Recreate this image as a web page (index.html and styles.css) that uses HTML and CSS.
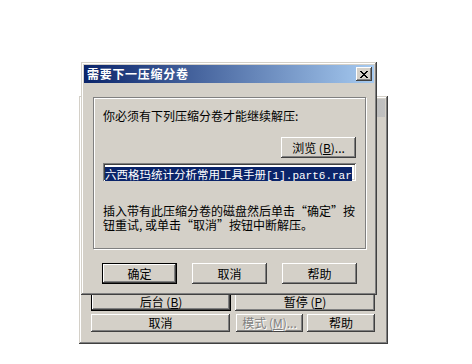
FILE: index.html
```html
<!DOCTYPE html>
<html lang="zh-CN">
<head>
<meta charset="utf-8">
<link rel="stylesheet" href="styles.css">
</head>
<body>
<div class="desktop">
  <div class="window back">
    <div class="titlebar inactive"></div>
    <div class="back-body"></div>
    <div class="back-row">
      <div class="btn default w140"><span>后台 (<u>B</u>)</span></div>
      <div class="btn w140"><span>暂停 (<u>P</u>)</span></div>
    </div>
    <div class="back-row row2">
      <div class="btn w139"><span>取消</span></div>
      <div class="btn w67 disabled"><span>模式 (<u>M</u>)...</span></div>
      <div class="btn w68"><span>帮助</span></div>
    </div>
  </div>

  <div class="window front">
    <div class="titlebar active">
      <span class="title">需要下一压缩分卷</span>
      <div class="closebtn">
        <svg width="8" height="7" viewBox="0 0 8 7"><path d="M0 0h2v1H0z M6 0h2v1H6z M1 1h2v1H1z M5 1h2v1H5z M2 2h4v1H2z M3 3h2v1H3z M2 4h4v1H2z M1 5h2v1H1z M5 5h2v1H5z M0 6h2v1H0z M6 6h2v1H6z" fill="#000"/></svg>
      </div>
    </div>
    <div class="dlg-body">
      <div class="group">
        <div class="line">你必须有下列压缩分卷才能继续解压:</div>
        <div class="btn browse"><span>浏览 (<u>B</u>)...</span></div>
        <div class="field"><span class="sel">六西格玛统计分析常用工具手册<span class="mono">[1].part6.rar</span></span></div>
        <div class="para">插入带有此压缩分卷的磁盘然后单击“确定”按<br>钮重试, 或单击“取消”按钮中断解压。</div>
      </div>
      <div class="buttons">
        <div class="btn default w75"><span>确定</span></div>
        <div class="btn w75"><span>取消</span></div>
        <div class="btn w75"><span>帮助</span></div>
      </div>
    </div>
  </div>
</div>
</body>
</html>
```
FILE: styles.css
```css
html, body {
  margin: 0;
  padding: 0;
  background: #ffffff;
}
.desktop {
  position: relative;
  width: 472px;
  height: 364px;
  overflow: hidden;
  font-family: "Noto Sans CJK SC", "Liberation Sans", sans-serif;
  font-size: 12px;
  color: #000;
}
.window {
  position: absolute;
  box-sizing: border-box;
  background: #d4d0c8;
  padding: 3px;
  display: flex;
  flex-direction: column;
  box-shadow: inset -1px -1px #404040, inset 1px 1px #d4d0c8,
              inset -2px -2px #808080, inset 2px 2px #ffffff;
}
.back {
  left: 79px;
  top: 96px;
  width: 309px;
  height: 248px;
  padding: 3px 13px 12px 12px;
}
.back .titlebar {
  margin: 0 -10px 0 -9px;
}
.front {
  left: 81px;
  top: 62px;
  width: 296px;
  height: 233px;
}
.titlebar {
  height: 18px;
  display: flex;
  align-items: center;
  justify-content: space-between;
  padding: 0 2px 0 3px;
  flex: none;
}
.titlebar.inactive {
  background: linear-gradient(to right, #808080, #c0c0c0);
}
.titlebar.active {
  background: linear-gradient(to right, #0a246a, #a6caf0);
}
.title {
  color: #fff;
  font-weight: bold;
  font-size: 12px;
  line-height: 14px;
  letter-spacing: 0.7px;
}
.closebtn {
  width: 16px;
  height: 14px;
  box-sizing: border-box;
  background: #d4d0c8;
  display: flex;
  align-items: center;
  justify-content: center;
  box-shadow: inset -1px -1px #404040, inset 1px 1px #ffffff,
              inset -2px -2px #808080, inset 2px 2px #d4d0c8;
}
.back-body {
  flex: 1;
}
.back-row {
  display: flex;
  gap: 4px;
  height: 18px;
}
.back-row.row2 {
  margin-top: 3px;
}
.back-row.row2 .w139 {
  margin-right: 2px;
}
.btn {
  box-sizing: border-box;
  background: #d4d0c8;
  display: flex;
  align-items: center;
  justify-content: center;
  line-height: 14px;
  white-space: nowrap;
  box-shadow: inset -1px -1px #404040, inset 1px 1px #ffffff,
              inset -2px -2px #808080, inset 2px 2px #d4d0c8;
}
.btn.default {
  border: 1px solid #000;
}
.btn u {
  text-decoration: underline;
}
.btn.disabled {
  color: #808080;
  text-shadow: 1px 1px #fff;
}
.w140 { width: 140px; }
.w139 { width: 139px; }
.w67 { width: 67px; }
.w68 { width: 68px; }
.w75 { width: 75px; height: 21px; }
.dlg-body {
  display: flex;
  flex-direction: column;
  padding: 14px 8px 0 9px;
}
.group {
  box-sizing: border-box;
  height: 152px;
  border: 1px solid #808080;
  box-shadow: inset 1px 1px #ffffff, 1px 1px #ffffff;
  padding: 11px 9px 0 9px;
  display: flex;
  flex-direction: column;
}
.line {
  line-height: 14px;
  height: 14px;
}
.browse {
  align-self: flex-end;
  width: 75px;
  height: 21px;
  margin-top: 14px;
}
.field {
  margin-top: 5px;
  width: 253px;
  height: 18px;
  box-sizing: border-box;
  background: #fff;
  padding: 2px 0 0 2px;
  overflow: hidden;
  white-space: nowrap;
  box-shadow: inset 1px 1px #808080, inset -1px -1px #ffffff,
              inset 2px 2px #404040, inset -2px -2px #d4d0c8;
}
.sel {
  display: inline-block;
  background: #0a246a;
  color: #fff;
  font-size: 11.5px;
  line-height: 14px;
  height: 14px;
}
.mono {
  font-family: "Liberation Mono", monospace;
  font-size: 11px;
}
.para {
  margin-top: 23px;
  line-height: 14px;
  white-space: nowrap;
}
.buttons {
  display: flex;
  gap: 15px;
  margin-top: 14px;
  padding-left: 9px;
}
```
